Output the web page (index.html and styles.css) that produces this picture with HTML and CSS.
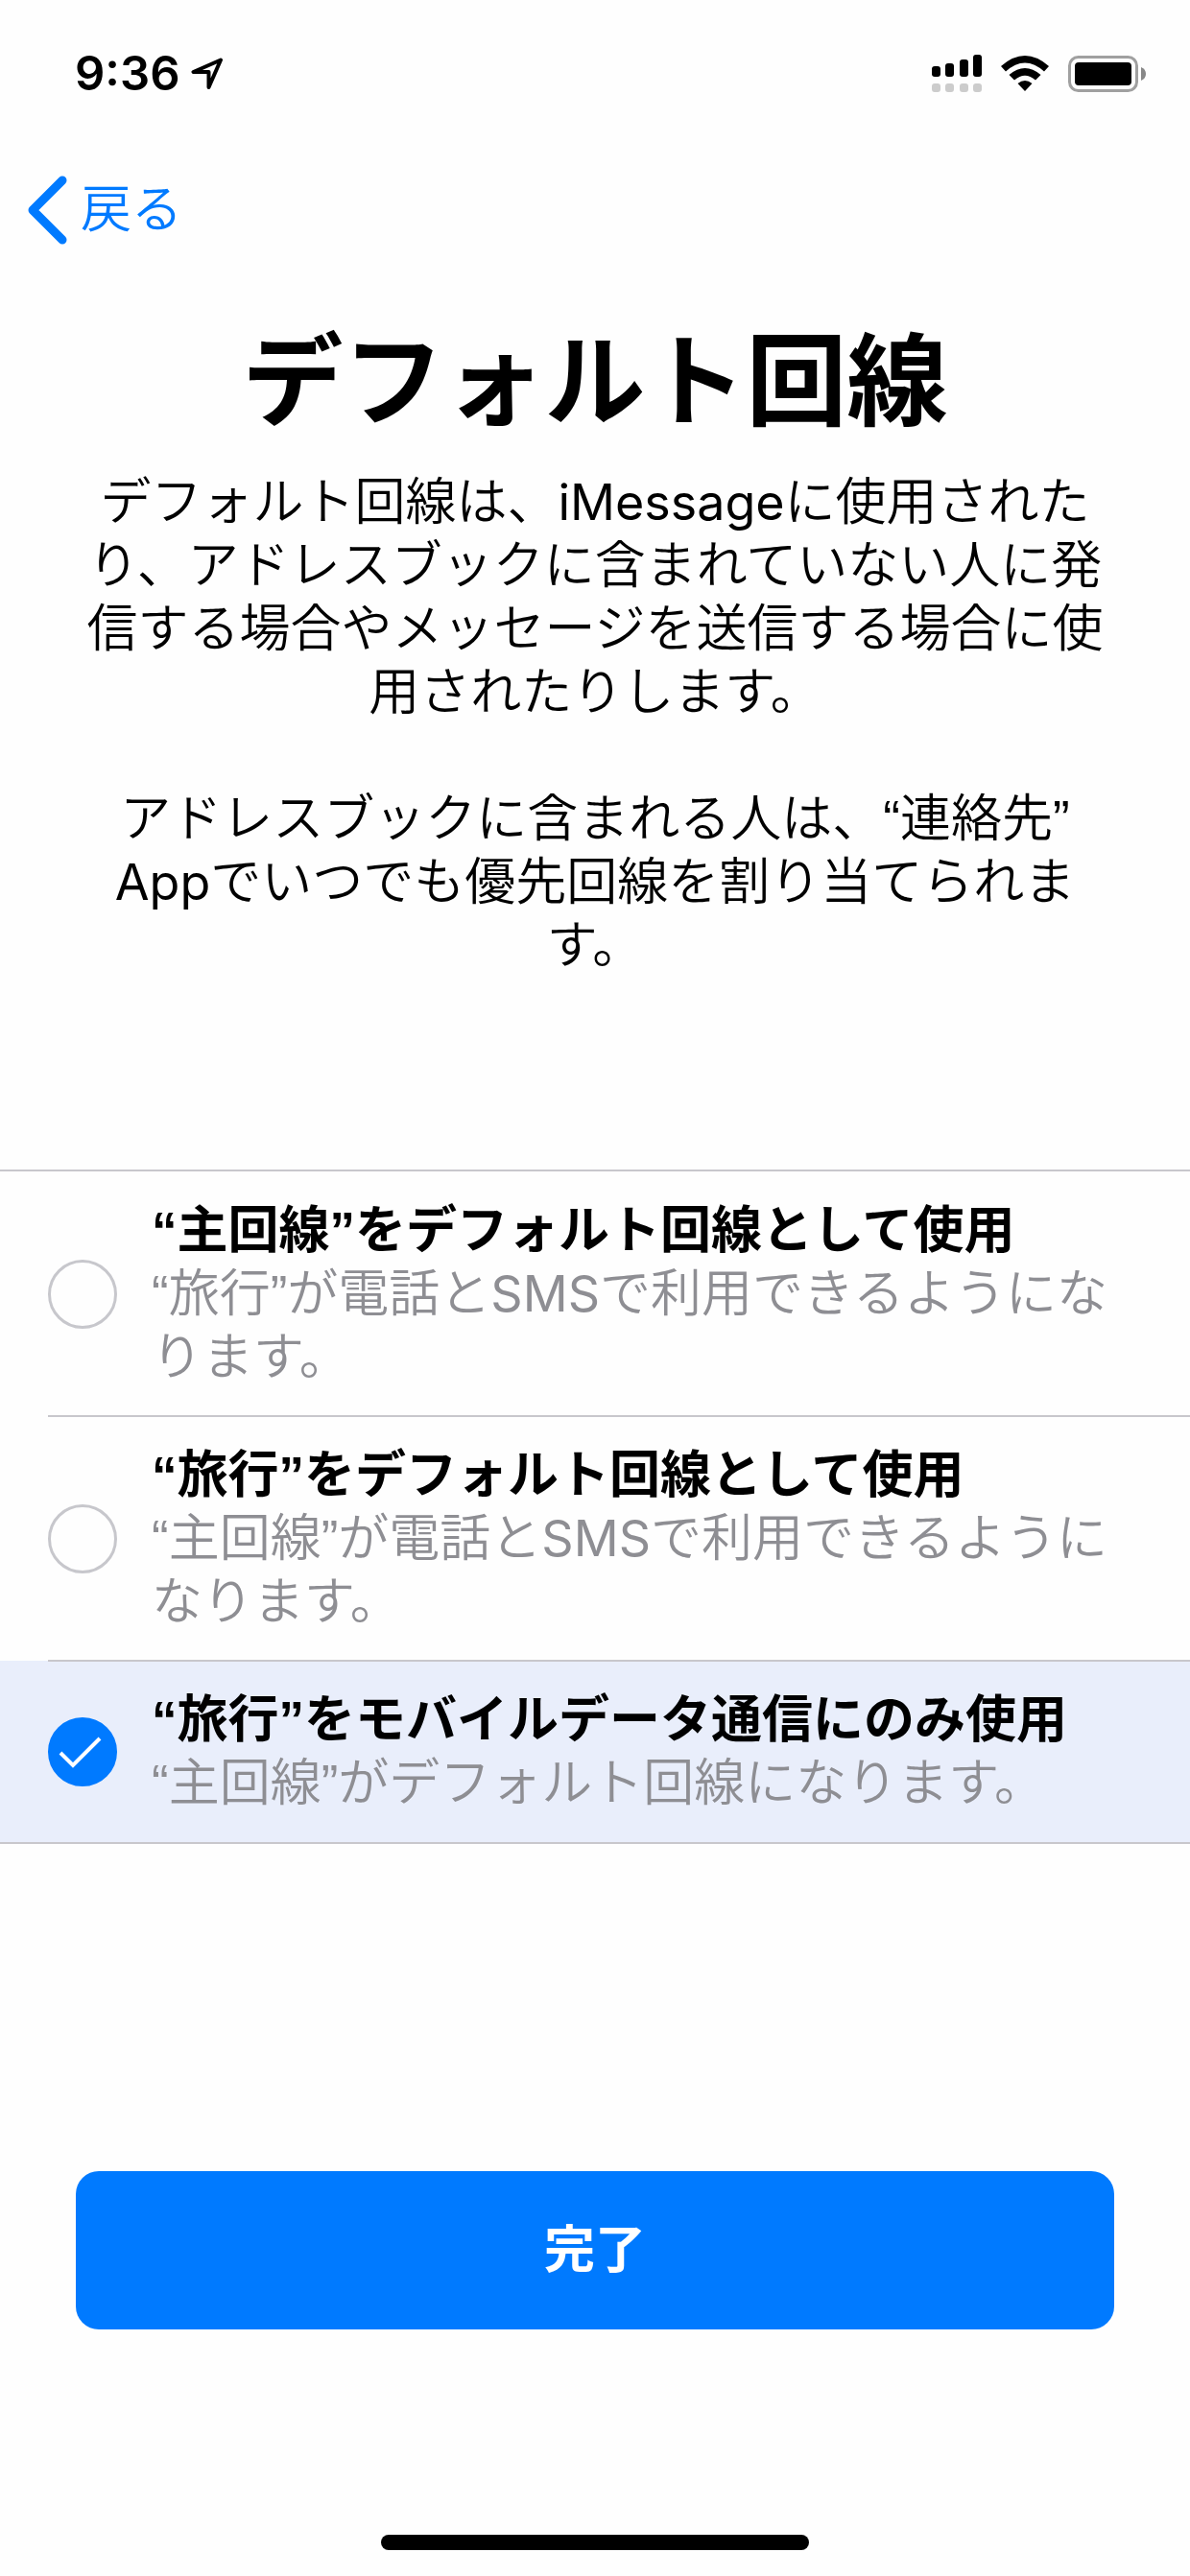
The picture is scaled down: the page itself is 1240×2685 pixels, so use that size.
FILE: index.html
```
<!DOCTYPE html>
<html lang="ja">
<head>
<meta charset="utf-8">
<meta name="viewport" content="width=device-width, initial-scale=1">
<title>デフォルト回線</title>
<link rel="stylesheet" href="styles.css">
</head>
<body>
<div class="status-bar">
  <span class="clock">9:36</span>
  <svg class="location" width="34" height="34" viewBox="0 0 34 34">
    <path d="M31 2.5 L2.5 15 H18.5 V31 Z" fill="none" stroke="#000" stroke-width="4" stroke-linejoin="round"/>
  </svg>
  <div class="indicators">
    <svg width="52" height="40" viewBox="0 0 52 40">
      <g fill="#000">
        <rect x="0" y="12" width="9" height="11" rx="3"/>
        <rect x="14" y="9" width="9" height="14" rx="3"/>
        <rect x="29" y="5" width="9" height="18" rx="3"/>
        <rect x="43" y="0" width="9" height="23" rx="3"/>
      </g>
      <g fill="#ccc">
        <rect x="0" y="30" width="9" height="9" rx="3"/>
        <rect x="14" y="30" width="9" height="9" rx="3"/>
        <rect x="29" y="30" width="9" height="9" rx="3"/>
        <rect x="43" y="30" width="9" height="9" rx="3"/>
      </g>
    </svg>
    <svg width="50" height="38" viewBox="0 0 50 38">
      <path d="M0 11 Q25 -11 50 11 L45 16.500 Q25 -1.500 5 16.500 Z"/>
      <path d="M8.500 20 Q25 6 41.500 20 L36 25.500 Q25 16 14 25.500 Z"/>
      <path d="M17.500 29 Q25 23 32.500 29 L25 37 Z"/>
    </svg>
    <svg width="82" height="38" viewBox="0 0 82 38">
      <rect x="1.500" y="1.500" width="70" height="35" rx="9" fill="none" stroke="#a0a0a0" stroke-width="3"/>
      <rect x="7" y="7" width="59" height="24" rx="4"/>
      <path d="M76 12 Q81 14 81 19 Q81 24 76 26 Z" fill="#888"/>
    </svg>
  </div>
</div>

<nav class="nav-bar">
  <a class="back" href="#">
    <svg width="42" height="72" viewBox="0 0 42 72">
      <path d="M37 5 L6 36 L37 67" fill="none" stroke="#007aff" stroke-width="9" stroke-linecap="round" stroke-linejoin="round"/>
    </svg>
    戻る
  </a>
</nav>

<form class="content">
  <header class="intro">
    <h1>デフォルト回線</h1>
    <p>デフォルト回線は、<span class="latin">iMessage</span>に使用された<br>り、アドレスブックに含まれていない人に発<br>信する場合やメッセージを送信する場合に使<br>用されたりします。</p>
    <p>アドレスブックに含まれる人は、“連絡先”<br><span class="latin">App</span>でいつでも優先回線を割り当てられま<br>す。</p>
  </header>

  <div class="options">
    <label class="option">
      <span class="radio">
        <input type="radio" name="line" value="primary">
      </span>
      <span class="text">
        <span class="name">“主回線”をデフォルト回線として使用</span>
        <span class="detail">“旅行”が電話と<span class="latin">SMS</span>で利用できるようにな<br>ります。</span>
      </span>
    </label>
    <label class="option">
      <span class="radio">
        <input type="radio" name="line" value="travel">
      </span>
      <span class="text">
        <span class="name">“旅行”をデフォルト回線として使用</span>
        <span class="detail">“主回線”が電話と<span class="latin">SMS</span>で利用できるように<br>なります。</span>
      </span>
    </label>
    <label class="option selected">
      <span class="radio">
        <input type="radio" name="line" value="data" checked>
        <svg width="72" height="72" viewBox="0 0 72 72">
          <path d="M13 37 L26 50 L54 22" fill="none" stroke="#fff" stroke-width="4"/>
        </svg>
      </span>
      <span class="text">
        <span class="name">“旅行”をモバイルデータ通信にのみ使用</span>
        <span class="detail">“主回線”がデフォルト回線になります。</span>
      </span>
    </label>
  </div>

  <button class="done" type="button">完了</button>
</form>

<div class="home-indicator"></div>
</body>
</html>
```
FILE: styles.css
```
* {
  box-sizing: border-box;
}
body {
  display: flex;
  flex-direction: column;
  min-height: 100vh;
  margin: 0;
  background: #fefefe;
  color: #000;
  font-family: "Liberation Sans", "Noto Sans CJK JP", sans-serif;
  font-size: 53px;
  font-weight: 350;
  line-height: 66px;
}
svg {
  display: block;
  flex: none;
}
.latin {
  font-family: Inter, sans-serif;
  font-size: 52px;
  font-weight: 400;
}

/* status bar */
.status-bar {
  display: flex;
  align-items: center;
  gap: 12px;
  padding: 44px 45px 0 78px;
}
.clock {
  font-family: Inter, sans-serif;
  font-size: 49px;
  font-weight: 600;
}
.indicators {
  display: flex;
  align-items: center;
  gap: 20px;
  margin-left: auto;
}

/* navigation */
.nav-bar {
  padding: 73px 28px 0;
}
.back {
  display: inline-flex;
  align-items: center;
  gap: 14px;
  color: #007aff;
  text-decoration: none;
}

/* title and description */
.content {
  display: flex;
  flex: 1;
  flex-direction: column;
}
.intro {
  padding: 0 80px;
  text-align: center;
}
h1 {
  margin: 67px 0 30px;
  font-size: 105px;
  font-weight: 700;
  line-height: 124px;
}
p {
  margin: 0 0 66px;
}

/* line choices */
.options {
  margin-top: 134px;
  border-top: 2px solid #c8c7cc;
  border-bottom: 2px solid #c8c7cc;
}
.option {
  display: flex;
  align-items: center;
  gap: 36px;
  position: relative;
  padding: 29px 50px 28px;
}
.option + .option::before {
  content: "";
  position: absolute;
  top: -1px;
  left: 50px;
  right: 0;
  height: 2px;
  background: #c8c7cc;
}
.selected {
  background: #e9eefb;
}
.radio {
  display: grid;
  flex: none;
}
.radio > * {
  grid-area: 1 / 1;
}
.radio input {
  appearance: none;
  width: 72px;
  height: 72px;
  margin: 0;
  border: 3px solid #c7c7cc;
  border-radius: 50%;
}
.radio input:checked {
  border-color: #007aff;
  background: #007aff;
}
.radio svg {
  pointer-events: none;
  z-index: 1;
}
.name,
.detail {
  display: block;
}
.name {
  font-weight: 700;
}
.detail {
  color: #8e8e93;
}

/* footer */
.done {
  height: 165px;
  margin: auto 79px 214px;
  border: 0;
  border-radius: 24px;
  background: #007aff;
  color: #fff;
  font: inherit;
  font-weight: 700;
}
.home-indicator {
  align-self: center;
  width: 36%;
  height: 16px;
  margin-bottom: 27px;
  border-radius: 8px;
  background: #000;
}
```
